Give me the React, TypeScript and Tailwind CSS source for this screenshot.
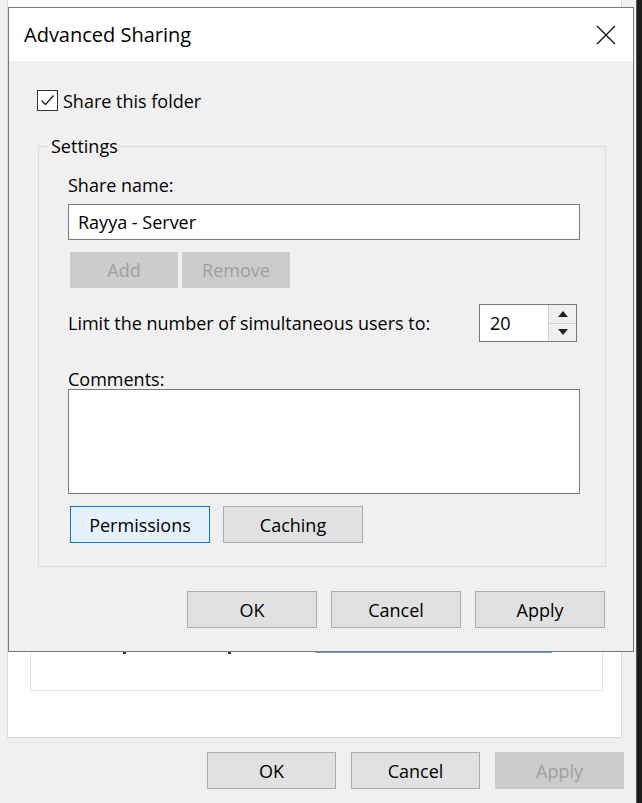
import React from "react";

function WinButton({
  label,
  w = "w-[130px]",
  h = "h-[37px]",
  variant = "normal",
}: {
  label: string;
  w?: string;
  h?: string;
  variant?: "normal" | "disabled" | "focused";
}) {
  const cls =
    variant === "disabled"
      ? "bg-[#cccccc] border-[#cccccc] text-[#a0a0a0]"
      : variant === "focused"
      ? "bg-[#e5f1fb] border-[#0078d7] text-black"
      : "bg-[#e1e1e1] border-[#adadad] text-black";
  return (
    <div className={`${w} ${h} border ${cls} flex items-center justify-center leading-none`}>
      {label}
    </div>
  );
}

export default function App() {
  return (
    <div className="relative w-[642px] h-[803px] overflow-hidden bg-[#f0f0f0] font-['Open_Sans','Noto_Sans',sans-serif] text-[18px] text-black flex">
      {/* background window */}
      <div className="w-[636px] h-full flex flex-col">
        <div className="ml-[7px] w-[615px] h-[738px] bg-white border-x border-b border-[#d9d9d9] flex flex-col justify-end pl-[22px] pr-[18px] pb-[46px]">
          <div className="h-[300px] border-x border-b border-[#e3e3e3] flex flex-col justify-end">
            <div className="h-[1px] flex">
              <div className="w-[92px]" />
              <div className="w-[3px] h-[2px] bg-[#333]" />
              <div className="w-[102px]" />
              <div className="w-[3px] h-[2px] bg-[#333]" />
              <div className="w-[84px]" />
              <div className="w-[237px] bg-[#6f9fd0]" />
            </div>
            <div className="h-[37px]" />
          </div>
        </div>
        <div className="flex justify-end gap-[15px] pr-[12px] pt-[14px]">
          <WinButton label="OK" w="w-[129px]" />
          <WinButton label="Cancel" w="w-[129px]" />
          <WinButton label="Apply" w="w-[129px]" variant="disabled" />
        </div>
      </div>
      <div className="w-[6px] h-full bg-[#1c1c1c] border-l border-[#555]" />

      {/* Advanced Sharing dialog */}
      <div className="absolute left-[8px] top-[7px] w-[626px] h-[645px] border border-[#7a7a7a] bg-[#f0f0f0] flex flex-col">
        <div className="h-[53px] bg-white flex items-center justify-between pl-[15px] pr-[17px]">
          <span className="text-[20px] leading-none">Advanced Sharing</span>
          <svg width="20" height="20" viewBox="0 0 20 20">
            <path d="M1 1 L19 19 M19 1 L1 19" stroke="#111" strokeWidth="1.3" fill="none" />
          </svg>
        </div>

        <div className="flex-1 flex flex-col pt-[29px]">
          {/* checkbox row */}
          <div className="flex items-center h-[21px] pl-[28px]">
            <div className="w-[21px] h-[21px] bg-white border border-[#333] flex items-center justify-center">
              <svg width="17" height="17" viewBox="0 0 17 17">
                <path d="M2.5 8.5 L6.5 12.5 L14.5 3.5" stroke="#222" strokeWidth="1.4" fill="none" />
              </svg>
            </div>
            <span className="ml-[5px] leading-none">Share this folder</span>
          </div>

          {/* Settings group */}
          <div className="relative mt-[35px] ml-[29px] mr-[27px] h-[421px] border border-[#dcdcdc] flex flex-col pl-[29px] pr-[25px] pt-[26px]">
            <span className="absolute left-[10px] top-[-12px] px-[2px] bg-[#f0f0f0] leading-[22px]">Settings</span>

            <div className="h-[24px] leading-[24px]">Share name:</div>
            <div className="mt-[7px] h-[36px] bg-white border border-[#7a7a7a] flex items-center pl-[9px] leading-none">
              Rayya - Server
            </div>
            <div className="mt-[12px] ml-[2px] flex gap-[4px]">
              <WinButton label="Add" w="w-[108px]" h="h-[36px]" variant="disabled" />
              <WinButton label="Remove" w="w-[108px]" h="h-[36px]" variant="disabled" />
            </div>

            <div className="mt-[16px] h-[38px] flex items-center justify-between pr-[3px]">
              <span className="leading-none">Limit the number of simultaneous users to:</span>
              <div className="w-[98px] h-[38px] bg-white border border-[#7a7a7a] flex">
                <div className="flex-1 flex items-center pl-[10px] leading-none">20</div>
                <div className="w-[28px] flex flex-col border-l border-[#cfcfcf]">
                  <div className="flex-1 bg-[#f0f0f0] border-b border-[#cfcfcf] flex items-center justify-center">
                    <svg width="10" height="6" viewBox="0 0 10 6">
                      <path d="M0 6 L5 0 L10 6 Z" fill="#222" />
                    </svg>
                  </div>
                  <div className="flex-1 bg-[#f0f0f0] flex items-center justify-center">
                    <svg width="10" height="6" viewBox="0 0 10 6">
                      <path d="M0 0 L10 0 L5 6 Z" fill="#222" />
                    </svg>
                  </div>
                </div>
              </div>
            </div>

            <div className="mt-[27px] h-[20px] leading-[20px]">Comments:</div>
            <div className="h-[105px] bg-white border border-[#7a7a7a]" />

            <div className="mt-[12px] ml-[2px] flex gap-[13px]">
              <WinButton label="Permissions" w="w-[140px]" variant="focused" />
              <WinButton label="Caching" w="w-[140px]" />
            </div>
          </div>

          {/* dialog buttons */}
          <div className="mt-[24px] flex justify-end gap-[14px] pr-[28px]">
            <WinButton label="OK" />
            <WinButton label="Cancel" />
            <WinButton label="Apply" />
          </div>
        </div>
      </div>
    </div>
  );
}
